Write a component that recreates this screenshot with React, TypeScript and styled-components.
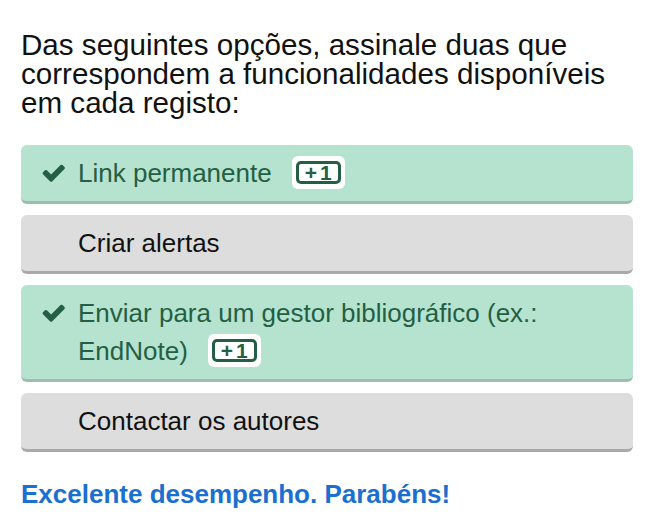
import React from "react";
import styled, { createGlobalStyle } from "styled-components";

const Global = createGlobalStyle`
  html, body { margin: 0; padding: 0; background: #ffffff; }
  body { font-family: "Liberation Sans", Arial, sans-serif; }
`;

const Page = styled.div`
  width: 612px;
  padding: 30px 24px 0 21px;
  display: flex;
  flex-direction: column;
`;

const Question = styled.div`
  font-size: 29.6px;
  line-height: 29px;
  color: #111111;
  margin: 0 0 28px 0;
`;

const List = styled.div`
  display: flex;
  flex-direction: column;
  gap: 11px;
`;

const Option = styled.div<{ $correct: boolean }>`
  display: flex;
  align-items: flex-start;
  padding: 9px 20px 9px 21px;
  border-radius: 6px;
  background: ${(p) => (p.$correct ? "#b5e3cf" : "#dddddd")};
  border-bottom: 3px solid ${(p) => (p.$correct ? "#9fbcb0" : "#a9a9a9")};
  color: ${(p) => (p.$correct ? "#245f43" : "#111111")};
  font-size: 26px;
  line-height: 38px;
`;

const IconCell = styled.span`
  flex: 0 0 36px;
  height: 38px;
  display: flex;
  align-items: center;
`;

const Label = styled.span`
  flex: 1;
`;

const Badge = styled.span`
  display: inline-flex;
  box-sizing: border-box;
  height: 33px;
  background: #ffffff;
  border-radius: 6px;
  padding: 5px 4px;
  margin: 2px 0 0 20px;
  vertical-align: top;
`;

const BadgeInner = styled.span`
  display: inline-flex;
  align-items: center;
  justify-content: center;
  width: 36px;
  height: 17px;
  border: 3px solid #245f43;
  border-radius: 5px;
  color: #245f43;
  font-weight: bold;
  font-size: 21px;
  line-height: 17px;
  padding-left: 3px;
  letter-spacing: 3px;
`;

const Feedback = styled.div`
  margin-top: 27px;
  font-size: 26px;
  line-height: 30px;
  font-weight: bold;
  color: #1a6fd1;
`;

const Check = () => (
  <svg width="23" height="19" viewBox="80 380 1600 1130" aria-hidden="true">
    <path
      fill="#245f43"
      d="M1671 566q0 40-28 68l-724 724-136 136q-28 28-68 28t-68-28l-136-136-362-362q-28-28-28-68t28-68l136-136q28-28 68-28t68 28l294 295 656-657q28-28 68-28t68 28l136 136q28 28 28 68z"
    />
  </svg>
);

const options = [
  { text: "Link permanente", correct: true },
  { text: "Criar alertas", correct: false },
  { text: "Enviar para um gestor bibliográfico (ex.: EndNote)", correct: true },
  { text: "Contactar os autores", correct: false },
];

export default function App() {
  return (
    <>
      <Global />
      <Page>
        <Question>
          Das seguintes opções, assinale duas que correspondem a funcionalidades disponíveis em cada registo:
        </Question>
        <List>
          {options.map((o) => (
            <Option key={o.text} $correct={o.correct}>
              <IconCell>{o.correct ? <Check /> : null}</IconCell>
              <Label>
                {o.text}
                {o.correct ? (
                  <Badge>
                    <BadgeInner>+1</BadgeInner>
                  </Badge>
                ) : null}
              </Label>
            </Option>
          ))}
        </List>
        <Feedback>Excelente desempenho. Parabéns!</Feedback>
      </Page>
    </>
  );
}
